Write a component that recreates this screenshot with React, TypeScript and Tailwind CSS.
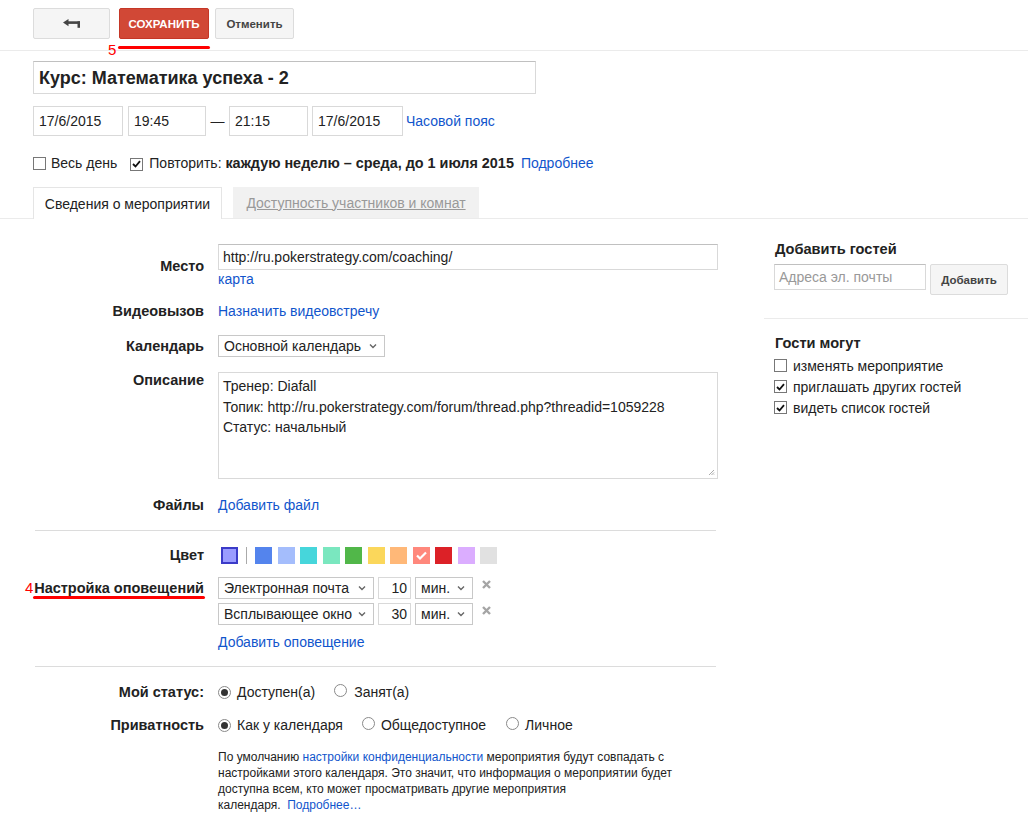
import React from 'react';

const link = 'text-[#1155cc] cursor-pointer';

const Check = ({ checked }: { checked?: boolean }) => (
  <span className="inline-flex h-[13px] w-[13px] shrink-0 items-center justify-center border border-[#777] bg-white">
    {checked && (
      <svg width="9" height="8" viewBox="0 0 9 8">
        <path d="M1 4 L3.5 6.5 L8 1.2" fill="none" stroke="#111" strokeWidth="1.8" />
      </svg>
    )}
  </span>
);

const Radio = ({ checked }: { checked?: boolean }) => (
  <span className="inline-flex h-[13px] w-[13px] shrink-0 items-center justify-center rounded-full border border-[#8a8a8a] bg-white">
    {checked && <span className="h-[7px] w-[7px] rounded-full bg-[#333]" />}
  </span>
);

const Chevron = () => (
  <svg width="8" height="6" viewBox="0 0 8 6" className="shrink-0">
    <path d="M1 1.5 L4 4.5 L7 1.5" fill="none" stroke="#666" strokeWidth="1.4" />
  </svg>
);

const Select = ({ text, className }: { text: string; className: string }) => (
  <div className={`flex h-[22px] items-center justify-between border border-[#c8c8c8] bg-white pl-[5px] pr-[7px] ${className}`}>
    <span>{text}</span>
    <Chevron />
  </div>
);

const Close = () => (
  <svg width="9" height="9" viewBox="0 0 9 9" className="ml-[9px] mt-[-7px]">
    <path d="M1 1 L8 8 M8 1 L1 8" stroke="#a5a5a5" strokeWidth="2.4" />
  </svg>
);

const BackIcon = () => (
  <svg width="17" height="9" viewBox="0 0 17 9">
    <path d="M0 3.6 L5.5 0 V7.2 Z" fill="#444" />
    <rect x="5" y="2.3" width="12" height="2.6" fill="#444" />
    <rect x="14.5" y="2.3" width="2.5" height="6.5" fill="#444" />
  </svg>
);

const Row = ({
  label,
  className,
  labelClass,
  children,
}: {
  label: React.ReactNode;
  className?: string;
  labelClass?: string;
  children: React.ReactNode;
}) => (
  <div className={`flex ${className ?? ''}`}>
    <div className={`w-[171px] shrink-0 text-right text-[14.5px] font-bold ${labelClass ?? ''}`}>{label}</div>
    <div className="ml-[14px] flex-1">{children}</div>
  </div>
);

const colors = [
  '#5484ed',
  '#a4bdfc',
  '#46d6db',
  '#7ae7bf',
  '#51b749',
  '#fbd75b',
  '#ffb878',
  '#ff887c',
  '#dc2127',
  '#dbadff',
  '#e1e1e1',
];

export default function App() {
  return (
    <div className="min-h-[820px] bg-white font-['Liberation_Sans',Arial,sans-serif] text-[14px] leading-[16px] text-[#222]">
      {/* toolbar */}
      <div className="relative flex h-[51px] items-start border-b border-[#ebebeb] pl-[33px] pt-[8px]">
        <button className="flex h-[31px] w-[77px] items-center justify-center rounded-[2px] border border-[#dcdcdc] bg-[#f5f5f5]">
          <BackIcon />
        </button>
        <button className="ml-[9px] h-[31px] w-[90px] rounded-[2px] border border-[#c53727] bg-[#d14836] text-[11.5px] font-bold text-white">
          СОХРАНИТЬ
        </button>
        <button className="ml-[6px] h-[31px] w-[79px] rounded-[2px] border border-[#dcdcdc] bg-[#f5f5f5] text-[11.5px] font-bold text-[#444]">
          Отменить
        </button>
        <span className="absolute left-[108px] top-[42px] text-[15px] leading-[15px] text-[#f00]">5</span>
        <span className="absolute left-[118px] top-[46px] h-[3px] w-[92px] rounded-full bg-[#f00]" />
      </div>

      <div className="pl-[33px]">
        <div className="mt-[10px] flex h-[33px] w-[503px] items-center border border-[#d9d9d9] border-t-[#c0c0c0] pl-[5px] text-[18px] font-bold">
          Курс: Математика успеха - 2
        </div>

        <div className="mt-[12px] flex h-[30px] items-center">
          <div className="flex h-[30px] w-[90px] items-center border border-[#d9d9d9] pl-[5px]">17/6/2015</div>
          <div className="ml-[5px] flex h-[30px] w-[78px] items-center border border-[#d9d9d9] pl-[5px]">19:45</div>
          <span className="mx-[4px] w-[15px] text-center">—</span>
          <div className="flex h-[30px] w-[79px] items-center border border-[#d9d9d9] pl-[5px]">21:15</div>
          <div className="ml-[4px] flex h-[30px] w-[91px] items-center border border-[#d9d9d9] pl-[5px]">17/6/2015</div>
          <span className={`ml-[3px] ${link}`}>Часовой пояс</span>
        </div>

        <div className="mt-[18px] flex h-[18px] items-center">
          <Check />
          <span className="ml-[5px]">Весь день</span>
          <span className="ml-[13px]">
            <Check checked />
          </span>
          <span className="ml-[6px]">
            Повторить: <b className="text-[14.4px]">каждую неделю – среда, до 1 июля 2015</b>
          </span>
          <span className={`ml-[7px] ${link}`}>Подробнее</span>
        </div>
      </div>

      {/* tabs */}
      <div className="mt-[15px] flex h-[32px] items-end border-b border-[#ebebeb] pl-[33px]">
        <div className="mb-[-1px] flex h-[32px] w-[189px] items-center justify-center border border-b-0 border-[#e5e5e5] bg-white">
          Сведения о мероприятии
        </div>
        <div className="ml-[11px] flex h-[31px] w-[246px] items-center justify-center bg-[#f1f1f1] text-[#999] underline">
          Доступность участников и комнат
        </div>
      </div>

      <div className="flex pl-[33px]">
        {/* left form */}
        <div className="w-[731px] shrink-0">
          <Row label="Место" className="mt-[25px]" labelClass="pt-[14px]">
            <div className="flex h-[26px] w-[500px] items-center border border-[#d9d9d9] border-t-[#c0c0c0] px-[4px]">
              http://ru.pokerstrategy.com/coaching/
            </div>
            <div className={`mt-[1px] ${link}`}>карта</div>
          </Row>

          <Row label="Видеовызов" className="mt-[16px]">
            <span className={link}>Назначить видеовстречу</span>
          </Row>

          <Row label="Календарь" className="mt-[16px] items-center">
            <Select text="Основной календарь" className="w-[167px]" />
          </Row>

          <Row label="Описание" className="mt-[15px]">
            <div className="relative h-[107px] w-[500px] border border-[#d9d9d9] px-[4px] pt-[3px] leading-[20.5px]">
              <div>Тренер: Diafall</div>
              <div>Топик: http://ru.pokerstrategy.com/forum/thread.php?threadid=1059228</div>
              <div>Статус: начальный</div>
              <svg width="7" height="7" viewBox="0 0 7 7" className="absolute bottom-[2px] right-[2px]">
                <path d="M6 1 L1 6 M6 3.5 L3.5 6 M6 5.5 L5.5 6" stroke="#aaa" strokeWidth="1" />
              </svg>
            </div>
          </Row>

          <Row label="Файлы" className="mt-[18px]">
            <span className={link}>Добавить файл</span>
          </Row>

          <div className="ml-[2px] mt-[17px] w-[681px] border-t border-[#dcdcdc]" />

          <Row label="Цвет" className="mt-[15px] items-center">
            <div className="flex h-[18px] items-center">
              <span className="ml-[3px] h-[17px] w-[17px] border-2 border-[#3b3bc8] bg-[#9a9cff]" />
              <span className="ml-[8px] h-[17px] w-px bg-[#aaa]" />
              <div className="ml-[8px] flex items-center gap-[5.5px]">
                {colors.map((c, i) => (
                  <span
                    key={c}
                    className="flex h-[17px] w-[17px] items-center justify-center"
                    style={{ backgroundColor: c }}
                  >
                    {i === 7 && (
                      <svg width="11" height="9" viewBox="0 0 11 9">
                        <path d="M1 4.5 L4 7.5 L10 1.5" fill="none" stroke="#fff" strokeWidth="2.2" />
                      </svg>
                    )}
                  </span>
                ))}
              </div>
            </div>
          </Row>

          <div className="relative mt-[13px] flex">
            <span className="absolute left-[-8px] top-[3px] text-[15px] leading-[15px] text-[#f00]">4</span>
            <span className="absolute left-0 top-[19px] h-[3px] w-[172px] rounded-full bg-[#f00]" />
            <div className="flex h-[22px] w-[171px] shrink-0 items-center justify-end text-[14.5px] font-bold">
              Настройка оповещений
            </div>
            <div className="ml-[14px]">
              <div className="flex items-center">
                <Select text="Электронная почта" className="w-[156px]" />
                <div className="ml-[4px] flex h-[22px] w-[33px] items-center justify-end border border-[#d9d9d9] pr-[3px]">10</div>
                <Select text="мин." className="ml-[4px] w-[58px]" />
                <Close />
              </div>
              <div className="mt-[4px] flex items-center">
                <Select text="Всплывающее окно" className="w-[156px]" />
                <div className="ml-[4px] flex h-[22px] w-[33px] items-center justify-end border border-[#d9d9d9] pr-[3px]">30</div>
                <Select text="мин." className="ml-[4px] w-[58px]" />
                <Close />
              </div>
              <div className={`mt-[9px] ${link}`}>Добавить оповещение</div>
            </div>
          </div>

          <div className="ml-[2px] mt-[16px] w-[681px] border-t border-[#dcdcdc]" />

          <Row label="Мой статус:" className="mt-[17px]">
            <div className="flex items-center">
              <Radio checked />
              <span className="ml-[6px]">Доступен(а)</span>
              <span className="ml-[19px]">
                <Radio />
              </span>
              <span className="ml-[7px]">Занят(а)</span>
            </div>
          </Row>

          <Row label="Приватность" className="mt-[17px]">
            <div className="flex items-center">
              <Radio checked />
              <span className="ml-[6px]">Как у календаря</span>
              <span className="ml-[19px]">
                <Radio />
              </span>
              <span className="ml-[6px]">Общедоступное</span>
              <span className="ml-[20px]">
                <Radio />
              </span>
              <span className="ml-[6px]">Личное</span>
            </div>
            <p className="mt-[16px] text-[12px] font-normal leading-[16px] text-[#222]">
              По умолчанию <span className={link}>настройки конфиденциальности</span> мероприятия будут совпадать с
              <br />
              настройками этого календаря. Это значит, что информация о мероприятии будет
              <br />
              доступна всем, кто может просматривать другие мероприятия
              <br />
              календаря.&nbsp; <span className={link}>Подробнее…</span>
            </p>
          </Row>
        </div>

        {/* right column */}
        <div className="flex-1">
          <div className="mt-[22px] pl-[11px] text-[14.6px] font-bold">Добавить гостей</div>
          <div className="mt-[7px] flex items-start pl-[10px]">
            <div className="flex h-[26px] w-[152px] items-center border border-[#d9d9d9] border-t-[#c0c0c0] pl-[4px] text-[#999]">
              Адреса эл. почты
            </div>
            <button className="ml-[4px] h-[31px] w-[78px] rounded-[2px] border border-[#dcdcdc] bg-[#f5f5f5] text-[11.5px] font-bold text-[#444]">
              Добавить
            </button>
          </div>
          <div className="mt-[23px] border-t border-[#ebebeb]" />
          <div className="mt-[16px] pl-[11px] text-[14.6px] font-bold">Гости могут</div>
          <div className="mt-[4px] pl-[10px]">
            <div className="flex h-[21px] items-center">
              <Check />
              <span className="ml-[6px]">изменять мероприятие</span>
            </div>
            <div className="flex h-[21px] items-center">
              <Check checked />
              <span className="ml-[6px]">приглашать других гостей</span>
            </div>
            <div className="flex h-[21px] items-center">
              <Check checked />
              <span className="ml-[6px]">видеть список гостей</span>
            </div>
          </div>
        </div>
      </div>
    </div>
  );
}
